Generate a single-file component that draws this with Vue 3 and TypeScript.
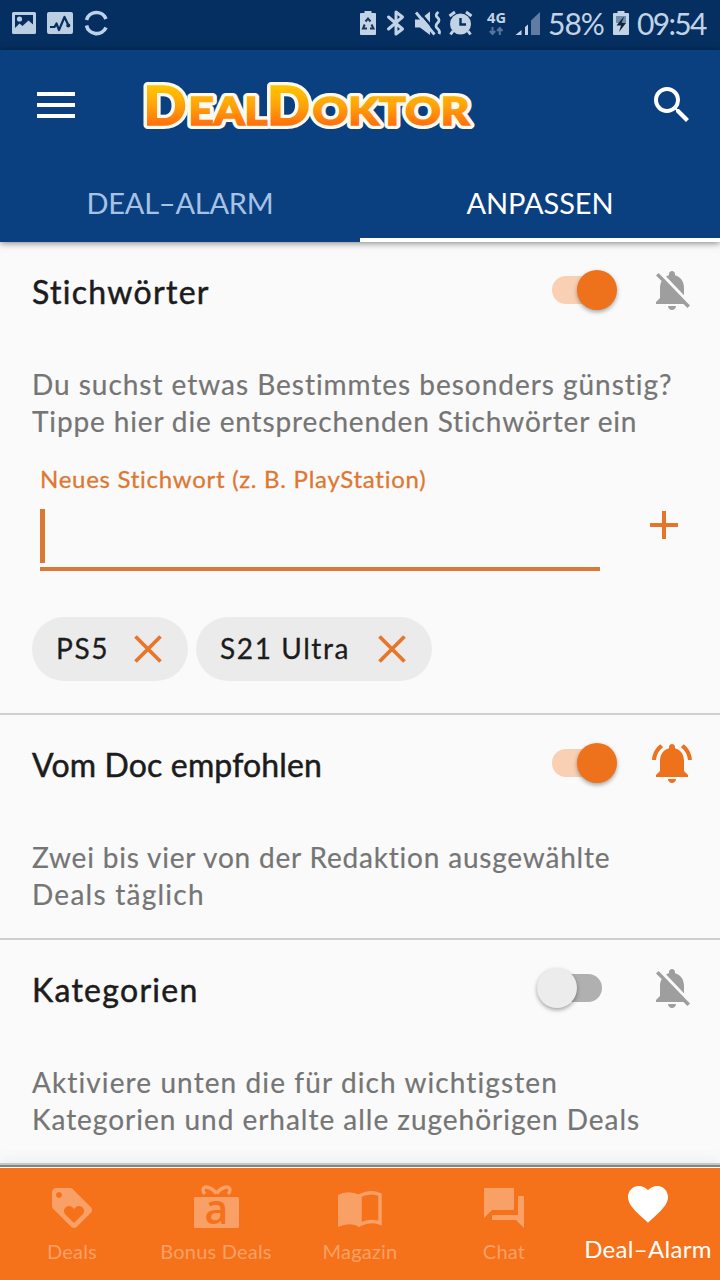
<script setup lang="ts">
import { ref } from 'vue'

interface NavItem {
  id: string
  label: string
}

interface Line {
  text: string
  tracking: number
}

interface Topic {
  id: string
  title: string
  titleTracking: number
  lines: Line[]
  enabled: boolean
  ringing: boolean
}

const topics = ref<Topic[]>([
  {
    id: 'keywords',
    title: 'Stichwörter',
    titleTracking: 1.3,
    lines: [
      { text: 'Du suchst etwas Bestimmtes besonders günstig?', tracking: 0.97 },
      { text: 'Tippe hier die entsprechenden Stichwörter ein', tracking: 0.86 },
    ],
    enabled: true,
    ringing: false,
  },
  {
    id: 'doc',
    title: 'Vom Doc empfohlen',
    titleTracking: 0.15,
    lines: [
      { text: 'Zwei bis vier von der Redaktion ausgewählte', tracking: 0.81 },
      { text: 'Deals täglich', tracking: 1.25 },
    ],
    enabled: true,
    ringing: true,
  },
  {
    id: 'categories',
    title: 'Kategorien',
    titleTracking: 1.3,
    lines: [
      { text: 'Aktiviere unten die für dich wichtigsten', tracking: 1.1 },
      { text: 'Kategorien und erhalte alle zugehörigen Deals', tracking: 0.98 },
    ],
    enabled: false,
    ringing: false,
  },
])

const keywords = ref<string[]>(['PS5', 'S21 Ultra'])

const navItems: NavItem[] = [
  { id: 'deals', label: 'Deals' },
  { id: 'bonus', label: 'Bonus Deals' },
  { id: 'magazine', label: 'Magazin' },
  { id: 'chat', label: 'Chat' },
  { id: 'alarm', label: 'Deal–Alarm' },
]

function removeKeyword(word: string): void {
  keywords.value = keywords.value.filter((k) => k !== word)
}
</script>

<template>
  <div class="screen">
    <div class="status">
      <svg class="status-left" width="110" height="50" viewBox="0 0 110 50">
        <path fill="#bccfe2" fill-rule="evenodd" d="M13.500 12h21q1.500 0 1.500 1.500v19q0 1.500-1.500 1.500h-21q-1.500 0-1.500-1.500v-19q0-1.500 1.500-1.500zM15 15v13l4.500-4.500 3 2.500 6-5.500 4.500 4V15z" />
        <circle cx="19.500" cy="19" r="2.600" fill="#bccfe2" />
        <rect x="47" y="12" width="26" height="22" rx="2" fill="#bccfe2" />
        <path d="M50 27h4.500l2-3.500 2.500 6.500 5.500-13 4 8.500" fill="none" stroke="#052f60" stroke-width="2.200" stroke-linejoin="round" />
        <circle cx="68.300" cy="25.500" r="2" fill="#052f60" />
        <path d="M86.500 20a10.300 10.300 0 0 1 19.500 -1M86.500 25.500a10.300 10.300 0 0 0 19.500 2" fill="none" stroke="#bcd2ec" stroke-width="3.600" />
      </svg>
      <div class="status-right">
        <svg width="132" height="50" viewBox="356 0 132 50">
          <path fill="#c2d3e6" d="M361 13h3.500v-2h7v2h3.500q1 0 1 1v20q0 1-1 1h-14q-1 0-1-1V14q0-1 1-1z" />
          <g fill="none" stroke="#17365c" stroke-width="2">
            <path d="M365.500 21.500l2.500-3 2.500 3M367 28.500h-4l1.700-4M370 28.500h3.500l-2-4" />
          </g>
          <path d="M388.500 17l14 12-6.500 5V12l6.500 5-14 12" fill="none" stroke="#c2d3e6" stroke-width="3" stroke-linejoin="round" stroke-linecap="round" />
          <path d="M415 19.500h5l10-8V35l-10-7.500h-5z" fill="#c2d3e6" />
          <path d="M419 11.500l17 20" stroke="#052f60" stroke-width="2.500" />
          <path d="M416 12.500l18.500 22" stroke="#c2d3e6" stroke-width="2.800" />
          <path d="M438.500 12q-4 3 -1 5.500t0 5.500 0 5.500 1.500 5.500" fill="none" stroke="#c2d3e6" stroke-width="2.800" />
          <circle cx="460.500" cy="24" r="10.500" fill="#c2d3e6" />
          <path d="M449.500 16l5.500-4M471.500 16l-5.500-4M453 31l-2.500 3.500M468 31l2.500 3.500" stroke="#c2d3e6" stroke-width="3" />
          <path d="M460.500 18v6.500h5.500" fill="none" stroke="#052f60" stroke-width="2.400" />
        </svg>
        <svg width="60" height="50" viewBox="484 0 60 50">
          <text x="487" y="23" class="net" textLength="19" lengthAdjust="spacingAndGlyphs">4G</text>
          <path d="M492.500 27v6.500m-2.700-2.500l2.700 3 2.700-3M499.800 35v-6.500m-2.700 2.500l2.700-3 2.700 3" fill="none" stroke="#54759c" stroke-width="2" />
          <path d="M515.500 35l6-5v5zM525 35v-8l3-2.500V35z" fill="#c2d3e6" />
          <path d="M531 35V20.500L540 12v23z" fill="#5f7da3" />
        </svg>
        <span class="battery-text">58%</span>
        <svg width="18" height="50" viewBox="612 0 18 50">
          <path fill="#c2d3e6" d="M614 13h3.500v-2h7v2h3.500q1 0 1 1v20q0 1-1 1h-14q-1 0-1-1V14q0-1 1-1z" />
          <path d="M616 16h10v7h-10z" fill="#6f8daf" />
          <path d="M623.500 17l-7 8.500h4.500l-2 6.500 7-9h-4.500l2.500-6z" fill="#12233b" />
        </svg>
        <span class="clock">09:54</span>
      </div>
    </div>

    <header class="appbar">
      <div class="toolbar">
        <svg class="menu" width="38" height="26" viewBox="0 0 38 26">
          <path d="M0 2h38M0 13h38M0 24h38" stroke="#fff" stroke-width="4" />
        </svg>
        <svg class="logo" width="344" height="76" viewBox="136 68 344 76">
          <defs>
            <linearGradient id="gold" gradientUnits="userSpaceOnUse" x1="0" y1="86" x2="0" y2="125">
              <stop offset="0" stop-color="#ffc400" />
              <stop offset="0.500" stop-color="#ffa10a" />
              <stop offset="1" stop-color="#ff6d0c" />
            </linearGradient>
          </defs>
          <g v-for="layer in ['outline', 'face']" :key="layer" :class="layer">
            <text x="143.500" y="124" class="cap" textLength="43" lengthAdjust="spacingAndGlyphs">D</text>
            <text x="188.500" y="124" class="small" textLength="79" lengthAdjust="spacingAndGlyphs">EAL</text>
            <text x="267" y="124" class="cap" textLength="43" lengthAdjust="spacingAndGlyphs">D</text>
            <text x="312.500" y="124" class="small" textLength="157" lengthAdjust="spacingAndGlyphs">OKTOR</text>
          </g>
        </svg>
        <svg class="search" width="48" height="48" viewBox="0 0 24 24">
          <path fill="#fff" d="M15.500 14h-.79l-.28-.27A6.471 6.471 0 0 0 16 9.500 6.500 6.500 0 1 0 9.500 16c1.610 0 3.090-.59 4.230-1.570l.27.28v.79l5 4.990L20.490 19l-4.990-5zm-6 0C7.010 14 5 11.990 5 9.500S7.010 5 9.500 5 14 7.010 14 9.500 11.990 14 9.500 14z" />
        </svg>
      </div>
      <nav class="tabs">
        <div class="tab"><span>DEAL–ALARM</span></div>
        <div class="tab active"><span>ANPASSEN</span></div>
      </nav>
    </header>

    <main class="content">
      <section v-for="topic in topics" :key="topic.id" class="topic" :class="topic.id">
        <div class="head">
          <h2 :style="{ letterSpacing: topic.titleTracking + 'px' }">{{ topic.title }}</h2>
          <button class="toggle" :class="{ on: topic.enabled }" @click="topic.enabled = !topic.enabled">
            <span class="thumb"></span>
          </button>
          <svg class="bell" :class="{ ringing: topic.ringing }" width="48" height="48" viewBox="0 0 24 24">
            <path v-if="topic.ringing" d="M7.580 4.080L6.150 2.650C3.750 4.480 2.170 7.300 2.030 10.500h2c.15-2.650 1.510-4.970 3.550-6.420zm12.390 6.420h2c-.15-3.200-1.730-6.020-4.120-7.850l-1.420 1.430c2.020 1.450 3.390 3.770 3.540 6.420zM18 11c0-3.070-1.640-5.640-4.500-6.320V4c0-.83-.67-1.500-1.500-1.500s-1.500.67-1.500 1.500v.68C7.630 5.360 6 7.920 6 11v5l-2 2v1h16v-1l-2-2v-5zm-6 11c.14 0 .27-.01.4-.04.65-.14 1.180-.58 1.440-1.180.1-.24.15-.5.15-.78h-4c.01 1.100.9 2 2.010 2z" />
            <path v-else d="M20 18.690L7.840 6.140 5.270 3.490 4 4.760l2.800 2.800v.01c-.52.990-.8 2.160-.8 3.420v5l-2 2v1h13.730l2 2L21 19.720l-1-1.030zM12 22c1.110 0 2-.89 2-2h-4c0 1.110.89 2 2 2zm6-7.320V11c0-3.080-1.640-5.640-4.500-6.320V4c0-.83-.67-1.500-1.500-1.500s-1.500.67-1.500 1.500v.68c-.15.03-.29.08-.42.12-.1.03-.2.07-.3.11h-.01c-.01 0-.01 0-.02.01-.23.09-.46.2-.68.31 0 0-.01 0-.01.01L18 14.680z" />
          </svg>
        </div>
        <p class="desc">
          <span v-for="line in topic.lines" :key="line.text" :style="{ letterSpacing: line.tracking + 'px' }">{{ line.text }}</span>
        </p>
        <template v-if="topic.id === 'keywords'">
          <div class="entry">
            <div class="field">
              <label>Neues Stichwort (z. B. PlayStation)</label>
              <div class="input"><i class="caret"></i></div>
            </div>
            <svg class="plus" width="28" height="28" viewBox="0 0 28 28">
              <path d="M14 0v28M0 14h28" stroke="#e5752a" stroke-width="4" />
            </svg>
          </div>
          <div class="chips">
            <div v-for="word in keywords" :key="word" class="chip">
              <span>{{ word }}</span>
              <svg width="28" height="28" viewBox="0 0 28 28" @click="removeKeyword(word)">
                <path d="M1.500 1.500l25 25M26.500 1.500l-25 25" stroke="#e8752a" stroke-width="3.800" />
              </svg>
            </div>
          </div>
        </template>
      </section>
    </main>

    <nav class="bottom">
      <div v-for="item in navItems" :key="item.id" class="nav-item" :class="item.id">
        <svg width="48" height="48" viewBox="0 0 48 48">
          <path v-if="item.id === 'deals'" transform="scale(2)" d="M21.410 11.580l-9-9C12.050 2.220 11.550 2 11 2H4c-1.100 0-2 .9-2 2v7c0 .55.220 1.050.590 1.420l9 9c.36.36.86.58 1.410.58.55 0 1.050-.22 1.410-.59l7-7c.37-.36.59-.86.59-1.410 0-.55-.23-1.060-.59-1.420zM5.500 7C4.670 7 4 6.330 4 5.500S4.670 4 5.500 4 7 4.670 7 5.500 6.330 7 5.500 7zm11.770 8.270L13 19.540l-4.270-4.270C8.280 14.810 8 14.190 8 13.500c0-1.380 1.120-2.500 2.500-2.500.69 0 1.320.28 1.770.74l.73.72.73-.73c.45-.45 1.080-.73 1.770-.73 1.380 0 2.500 1.120 2.500 2.500 0 .69-.28 1.320-.73 1.770z" />
          <template v-else-if="item.id === 'bonus'">
            <rect x="2" y="13" width="45" height="31" rx="1.500" />
            <path class="bow" d="M24.500 9.500C21 4 12 0.500 11 5.500c0 2 .5 3 2 4.500M24.500 9.500C28 4 37 0.500 38 5.500c0 2-.5 3-2 4.500" />
            <text x="24.500" y="40" text-anchor="middle" class="gift-a">a</text>
          </template>
          <template v-else-if="item.id === 'magazine'">
            <path d="M2 11q10-5.500 22 0v32q-10-5.500-22 0z" />
            <path class="page" d="M24 11.500q10-5 20 -1V39q-10-3.500-20 1.500z" />
          </template>
          <path v-else-if="item.id === 'chat'" transform="scale(2)" d="M21.500 6H19v9.500H6v2.200q0 .3.300.3H18l4 4V6.500q0-.5-.5-.5zM17 12.500V2.500q0-.5-.5-.5H2.500q-.5 0-.5.5V17l4-4h10.500q.5 0 .5-.5z" />
          <path v-else transform="scale(2)" d="M12 21.350l-1.450-1.320C5.400 15.360 2 12.280 2 8.500 2 5.420 4.420 3 7.500 3c1.740 0 3.410.81 4.500 2.090C13.090 3.810 14.760 3 16.500 3 19.580 3 22 5.420 22 8.500c0 3.780-3.400 6.860-8.550 11.540L12 21.350z" />
        </svg>
        <span>{{ item.label }}</span>
      </div>
    </nav>
  </div>
</template>

<style>
html,
body {
  margin: 0;
  background: #fafafa;
}
</style>

<style scoped>
.screen {
  width: 720px;
  height: 1280px;
  display: flex;
  flex-direction: column;
  overflow: hidden;
  background: #fafafa;
  font-family: Lato, 'Open Sans', sans-serif;
  font-variant-ligatures: none;
  white-space: nowrap;
}
svg {
  display: block;
  flex: none;
  overflow: visible;
}
.status {
  height: 50px;
  flex: none;
  background: #052f60;
  display: flex;
  justify-content: space-between;
}
.status-right {
  display: flex;
  width: 364px;
  color: #c2d3e6;
  font-size: 30px;
  line-height: 47px;
}
.status-right svg + svg {
  margin-left: -4px;
}
.net {
  font: 700 15px 'Open Sans', sans-serif;
  fill: #c2d3e6;
}
.battery-text {
  width: 68px;
  padding-left: 4px;
  box-sizing: border-box;
  letter-spacing: -1px;
}
.clock {
  padding-left: 7px;
  letter-spacing: -1.7px;
}
.appbar {
  height: 192px;
  flex: none;
  background: #0b4080;
  box-shadow: 0 1px 7px rgba(0, 0, 0, 0.5);
  z-index: 1;
}
.toolbar {
  height: 110px;
  display: flex;
  align-items: center;
  padding: 0 25px 0 37px;
}
.logo {
  margin: 4px 0 0 61px;
}
.search {
  margin-left: auto;
  margin-right: -1px;
}
.logo text {
  font-family: Lato, sans-serif;
  font-weight: 900;
}
.cap {
  font-size: 53px;
}
.small {
  font-size: 38px;
}
.outline text {
  fill: #fffaf0;
  stroke: #fffaf0;
  stroke-width: 8px;
  stroke-linejoin: round;
}
.face text {
  fill: url(#gold);
  stroke: url(#gold);
  stroke-width: 1.4px;
}
.tabs {
  display: flex;
  height: 82px;
}
.tab {
  flex: 1;
  display: flex;
  justify-content: center;
  font-size: 29px;
  line-height: 86px;
  color: #a6c3e6;
  letter-spacing: -0.1px;
  box-sizing: border-box;
}
.tab:first-child {
  letter-spacing: -0.25px;
}
.tab.active {
  color: #fff;
  border-bottom: 4px solid #fff;
}
.content {
  flex: 1;
  min-height: 0;
  overflow: hidden;
}
.topic {
  border-bottom: 2px solid #cfcfcf;
  padding-bottom: 25px;
}
.topic.keywords {
  padding-bottom: 32px;
}
.topic.categories {
  border: 0;
}
.head {
  height: 96px;
  display: flex;
  align-items: center;
  padding: 0 24px 0 32px;
}
h2 {
  flex: 1;
  margin: 4px 0 0;
  font-size: 32px;
  font-weight: 400;
  line-height: 40px;
  color: #1c1c1c;
  -webkit-text-stroke: 0.5px #1c1c1c;
}
.toggle {
  width: 50px;
  height: 28px;
  margin-right: 46px;
  padding: 0;
  border: 0;
  border-radius: 14px;
  background: #b0b0b0;
  position: relative;
}
.thumb {
  position: absolute;
  left: -15px;
  top: -6px;
  width: 40px;
  height: 40px;
  border-radius: 50%;
  background: #ececec;
  box-shadow: 0 2px 4px rgba(0, 0, 0, 0.35);
}
.toggle.on {
  background: #fad0b4;
}
.toggle.on .thumb {
  left: 25px;
  background: #ee711b;
}
.bell {
  fill: #9e9e9e;
}
.bell.ringing {
  fill: #ee711b;
}
.desc {
  margin: 28px 0 0;
  padding-left: 32px;
  font-size: 28px;
  line-height: 37px;
  color: #757575;
  -webkit-text-stroke: 0.2px #757575;
}
.desc span {
  display: block;
}
.entry {
  display: flex;
  padding-left: 40px;
}
.field {
  width: 560px;
  height: 131px;
  box-sizing: border-box;
  border-bottom: 4px solid #d97b36;
  padding-top: 23px;
}
label {
  display: block;
  height: 46px;
  line-height: 32px;
  font-size: 24px;
  letter-spacing: 0.72px;
  color: #dd7832;
  -webkit-text-stroke: 0.3px #dd7832;
}
.caret {
  display: block;
  width: 5px;
  height: 54px;
  background: #dd7832;
}
.plus {
  margin: 71px 0 0 50px;
}
.chips {
  display: flex;
  gap: 8px;
  margin: 46px 0 0 32px;
}
.chip {
  height: 64px;
  box-sizing: border-box;
  border-radius: 32px;
  background: #ebebeb;
  display: flex;
  align-items: center;
  justify-content: space-between;
  padding: 0 26px 0 24px;
  font-size: 28px;
  letter-spacing: 1.6px;
  color: #1c1c1c;
  -webkit-text-stroke: 0.3px #1c1c1c;
}
.chip:first-child {
  width: 156px;
}
.chip:nth-child(2) {
  width: 236px;
}
.chip span {
  margin-top: -2px;
}
.bottom {
  height: 112px;
  flex: none;
  display: flex;
  background: #f5721b;
  box-shadow: 0 -1px 0 #fff, 0 -3px 0 #85857b, 0 -5px 0 #c4c8c4, 0 -7px 12px rgba(90, 120, 170, 0.12);
  z-index: 1;
}
.nav-item {
  width: 144px;
  display: flex;
  flex-direction: column;
  align-items: center;
  padding-top: 16px;
  box-sizing: border-box;
  color: #f9a066;
  fill: #f9a066;
  font-size: 20px;
  letter-spacing: 0.2px;
  line-height: 24px;
}
.nav-item span {
  margin-top: 7px;
}
.nav-item.alarm {
  padding-top: 12px;
  color: #fff;
  fill: #fff;
  font-size: 24px;
  letter-spacing: 0.3px;
}
.nav-item.alarm span {
  margin-top: 9px;
}
.bow {
  fill: none;
  stroke: #f9a066;
  stroke-width: 3.500px;
}
.page {
  fill: none;
  stroke: #f9a066;
  stroke-width: 3.500px;
}
.gift-a {
  font: 600 41px 'Open Sans', sans-serif;
  fill: #f5721b;
}
</style>
